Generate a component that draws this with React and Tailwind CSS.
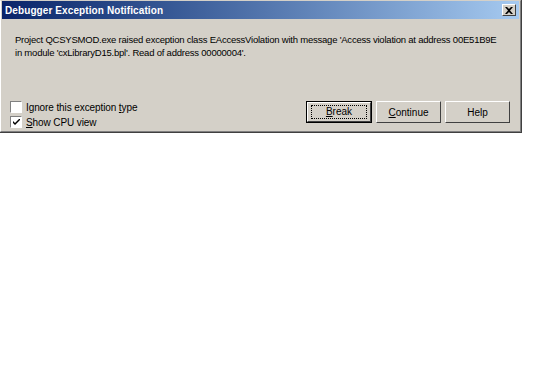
export default function App() {
  const font = { fontFamily: '"Liberation Sans", Arial, sans-serif' };
  return (
    <div className="w-[540px] h-[377px] bg-white text-black" style={font}>
      <div className="w-[522px] h-[133px] bg-[#d4d0c8] border-r border-b border-r-[#404040] border-b-[#404040] flex flex-col">
        <div className="flex-1 flex flex-col border-l border-t border-r border-b border-t-[#d4d0c8] border-l-white border-r-[#808080] border-b-[#808080] pl-px pr-px pb-px">
          <div className="h-[18px] flex items-center justify-between pl-[3px] pr-[3px] bg-gradient-to-r from-[#0a246a] to-[#a6caf0]">
            <span className="text-white text-[10px] font-bold tracking-[0.1px]">Debugger Exception Notification</span>
            <div className="w-[14px] h-[12px] bg-[#d4d0c8] border border-t-white border-l-white border-r-[#404040] border-b-[#404040] flex items-center justify-center">
              <svg width="8" height="7" viewBox="0 0 8 7">
                <path d="M0 0h2l2 2 2-2h2L5 3.5 8 7H6L4 5 2 7H0l3-3.5z" fill="#000" />
              </svg>
            </div>
          </div>
          <div className="flex-1 flex flex-col pl-[13px] pr-[8px]">
            <p className="mt-[14px] text-[9.5px] leading-[13px] tracking-[-0.22px] whitespace-nowrap">
              Project QCSYSMOD.exe raised exception class EAccessViolation with message 'Access violation at address 00E51B9E
              <br />
              in module 'cxLibraryD15.bpl'. Read of address 00000004'.
            </p>
            <div className="mt-auto flex items-end justify-between">
              <div className="flex flex-col gap-[3px] -ml-[5px] mb-[2px] text-[10px] tracking-[-0.1px]">
                <label className="h-[12px] flex items-center gap-[4px]">
                  <span className="w-[12px] h-[12px] bg-white border border-t-[#808080] border-l-[#808080] border-r-white border-b-white" />
                  <span>Ignore this exception <u>t</u>ype</span>
                </label>
                <label className="h-[12px] flex items-center gap-[4px]">
                  <span className="w-[12px] h-[12px] bg-white border border-t-[#808080] border-l-[#808080] border-r-white border-b-white flex items-center justify-center">
                    <svg width="7" height="7" viewBox="0 0 7 7">
                      <path d="M0 2l2 2 5-5v2L2 6 0 4z" fill="#000" />
                    </svg>
                  </span>
                  <span><u>S</u>how CPU view</span>
                </label>
              </div>
              <div className="flex gap-[4px] mr-[1px] mb-[7px] text-[10px]">
                <div className="w-[66px] h-[22px] border border-black">
                  <div className="w-full h-full border border-t-white border-l-white border-r-[#404040] border-b-[#404040] flex items-center justify-center">
                    <span className="outline outline-1 outline-dotted outline-black leading-[12px] w-[54px] text-center">
                      <u>B</u>reak
                    </span>
                  </div>
                </div>
                <div className="w-[65px] h-[22px] border border-t-white border-l-white border-r-[#404040] border-b-[#404040] flex items-center justify-center">
                  <span><u>C</u>ontinue</span>
                </div>
                <div className="w-[65px] h-[22px] border border-t-white border-l-white border-r-[#404040] border-b-[#404040] flex items-center justify-center">
                  Help
                </div>
              </div>
            </div>
          </div>
        </div>
      </div>
    </div>
  );
}
